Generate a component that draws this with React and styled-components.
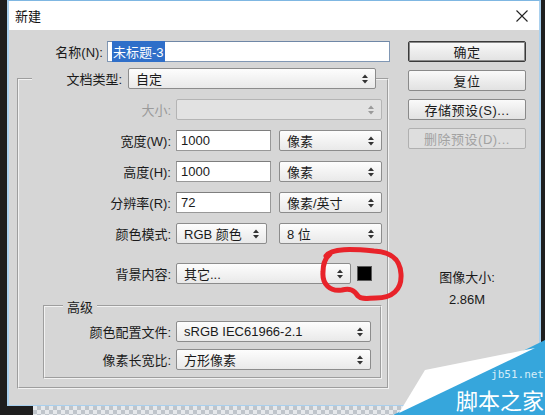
import styled, { createGlobalStyle } from "styled-components";

const GlobalStyle = createGlobalStyle`
  html, body {
    margin: 0;
    padding: 0;
    background: #1e1e1e;
  }
  body {
    font-family: "Liberation Sans", "Noto Sans CJK SC", sans-serif;
    font-size: 13px;
    color: #1a1a1a;
  }
`;

const Screen = styled.div`
  position: relative;
  width: 545px;
  height: 415px;
  overflow: hidden;
  background: #1e1e1e;
`;

const Dialog = styled.div`
  margin-left: 7px;
  width: 534px;
  height: 406px;
  box-sizing: border-box;
  background: #d6d6d6;
  border-left: 2px solid #a9d0ee;
  border-right: 2px solid #a9d0ee;
  border-top: 1px solid #7fb7e2;
  border-bottom: 1px solid #a9d0ee;
  display: flex;
  flex-direction: column;
`;

const TitleBar = styled.div`
  height: 29px;
  flex: none;
  background: #ffffff;
  display: flex;
  align-items: center;
  justify-content: space-between;
  padding: 0 11px 0 6px;
  font-size: 13px;
  color: #111;
`;

const Body = styled.div`
  display: flex;
  padding-top: 11px;
`;

const LeftCol = styled.div`
  width: 382px;
  flex: none;
`;

const RightCol = styled.div`
  margin-left: 17px;
  width: 118px;
  display: flex;
  flex-direction: column;
  gap: 8px;
  text-align: center;
`;

const Row = styled.div`
  display: flex;
  align-items: center;
  height: 21px;
  margin-top: ${(p) => p.$mt || 0}px;
`;

const Label = styled.div`
  width: ${(p) => p.$w}px;
  flex: none;
  text-align: right;
  padding-right: ${(p) => p.$pr ?? 5}px;
  box-sizing: border-box;
  white-space: nowrap;
  color: ${(p) => (p.$disabled ? "#9a9a9a" : "#1a1a1a")};
`;

const TextInput = styled.div`
  width: ${(p) => p.$w}px;
  height: 21px;
  box-sizing: border-box;
  background: #ffffff;
  border: 1px solid ${(p) => (p.$focus ? "#8097b4" : "#989898")};
  border-top-color: ${(p) => (p.$focus ? "#6f87a6" : "#7e7e7e")};
  display: flex;
  align-items: center;
  padding-left: 4px;
  font-size: 13px;
  flex: none;
`;

const Selected = styled.span`
  background: #2f6fc9;
  color: #ffffff;
  padding: 1px 1px;
`;

const Select = styled.div`
  position: relative;
  width: ${(p) => p.$w}px;
  height: 21px;
  box-sizing: border-box;
  border: 1px solid ${(p) => (p.$disabled ? "#b4b4b4" : "#8c8c8c")};
  border-radius: 2px;
  background: ${(p) =>
    p.$disabled
      ? "#e2e2e2"
      : "linear-gradient(#fdfdfd, #f1f1f1 60%, #e9e9e9)"};
  display: flex;
  align-items: center;
  padding-left: 7px;
  margin-left: ${(p) => p.$ml || 0}px;
  flex: none;
  white-space: nowrap;
  svg {
    position: absolute;
    right: 7px;
    top: 5px;
  }
`;

const Swatch = styled.div`
  width: 15px;
  height: 15px;
  margin-left: 6px;
  background: #000;
  border: 1px solid #5a5a5a;
  box-sizing: border-box;
  flex: none;
`;

const Group = styled.fieldset`
  margin: ${(p) => p.$margin};
  width: ${(p) => p.$w}px;
  box-sizing: border-box;
  border: 2px groove #f2f2f2;
  padding: ${(p) => p.$pad};
  min-width: 0;
`;

const Legend = styled.legend`
  padding: ${(p) => p.$pad || "0"};
  margin-left: ${(p) => p.$ml}px;
  display: flex;
  align-items: center;
  height: ${(p) => p.$h}px;
`;

const Rows = styled.div`
  display: flex;
  flex-direction: column;
  gap: ${(p) => p.$gap}px;
  padding-top: ${(p) => p.$pt}px;
`;

const Button = styled.div`
  height: 21px;
  box-sizing: border-box;
  border: 1px solid ${(p) => (p.$default ? "#3a3a3a" : p.$disabled ? "#b0b0b0" : "#8a8a8a")};
  box-shadow: ${(p) => (p.$default ? "inset 0 0 0 1px #8a8a8a" : "none")};
  border-radius: 2px;
  background: ${(p) =>
    p.$disabled ? "#dedede" : "linear-gradient(#fafafa, #ececec 55%, #e2e2e2)"};
  color: ${(p) => (p.$disabled ? "#a2a2a2" : "#1a1a1a")};
  display: flex;
  align-items: center;
  justify-content: center;
  letter-spacing: 0.5px;
`;

const SizeInfo = styled.div`
  margin-top: 110px;
  line-height: 22px;
  color: #1a1a1a;
`;

const Canvas = styled.div`
  margin-left: 33px;
  width: 380px;
  height: 10px;
  background-color: #e6e9ec;
  background-image: linear-gradient(45deg, #bfc5cb 25%, transparent 25%, transparent 75%, #bfc5cb 75%),
    linear-gradient(45deg, #bfc5cb 25%, transparent 25%, transparent 75%, #bfc5cb 75%);
  background-size: 8px 8px;
  background-position: 0 0, 4px 4px;
`;

const Scribble = styled.svg`
  position: absolute;
  left: 312px;
  top: 244px;
  pointer-events: none;
`;

const Watermark = styled.div`
  position: absolute;
  right: 0;
  bottom: 0;
  width: 160px;
  height: 75px;
  svg {
    position: absolute;
    left: 0;
    top: 0;
  }
`;

const WmSite = styled.div`
  position: absolute;
  right: 1px;
  top: 29px;
  font-family: "DejaVu Sans Mono", "Liberation Mono", monospace;
  font-size: 11px;
  line-height: 12px;
  color: #d6eef9;
`;

const WmName = styled.div`
  position: absolute;
  right: 1px;
  top: 46px;
  font-family: "Noto Sans CJK SC", sans-serif;
  font-size: 22px;
  line-height: 26px;
  color: #ffffff;
`;

const Spinner = ({ disabled }) => (
  <svg width="6" height="10" viewBox="0 0 6 10">
    <polygon points="0,4 3,0.5 6,4" fill={disabled ? "#9a9a9a" : "#333"} />
    <polygon points="0,6 3,9.5 6,6" fill={disabled ? "#9a9a9a" : "#333"} />
  </svg>
);

const Close = () => (
  <svg width="12" height="12" viewBox="0 0 12 12">
    <path d="M0.5 0.5 L11.5 11.5 M11.5 0.5 L0.5 11.5" stroke="#222" strokeWidth="1.1" />
  </svg>
);

export default function App() {
  return (
    <Screen>
      <GlobalStyle />
      <Dialog>
        <TitleBar>
          <span>新建</span>
          <Close />
        </TitleBar>
        <Body>
          <LeftCol>
            <Row>
              <Label $w={98} $pr={4}>名称(N):</Label>
              <TextInput $w={283} $focus>
                <Selected>未标题-3</Selected>
              </TextInput>
            </Row>
            <Group $margin="6px 0 0 8px" $w={372} $pad="0 0 8px 0">
              <Legend $ml={13} $h={21}>
                <Label $w={96} $pr={6}>文档类型:</Label>
                <Select $w={248}>
                  自定
                  <Spinner />
                </Select>
              </Legend>
              <Rows $gap={10} $pt={10}>
                <Row>
                  <Label $w={157} $disabled>大小:</Label>
                  <Select $w={206} $disabled>
                    <Spinner disabled />
                  </Select>
                </Row>
                <Row>
                  <Label $w={157}>宽度(W):</Label>
                  <TextInput $w={95}>1000</TextInput>
                  <Select $w={103} $ml={8}>
                    像素
                    <Spinner />
                  </Select>
                </Row>
                <Row>
                  <Label $w={157}>高度(H):</Label>
                  <TextInput $w={95}>1000</TextInput>
                  <Select $w={103} $ml={8}>
                    像素
                    <Spinner />
                  </Select>
                </Row>
                <Row>
                  <Label $w={157}>分辨率(R):</Label>
                  <TextInput $w={95}>72</TextInput>
                  <Select $w={103} $ml={8}>
                    像素/英寸
                    <Spinner />
                  </Select>
                </Row>
                <Row>
                  <Label $w={157}>颜色模式:</Label>
                  <Select $w={91}>
                    RGB 颜色
                    <Spinner />
                  </Select>
                  <Select $w={103} $ml={12}>
                    8 位
                    <Spinner />
                  </Select>
                </Row>
                <Row $mt={9}>
                  <Label $w={157}>背景内容:</Label>
                  <Select $w={175}>
                    其它...
                    <Spinner />
                  </Select>
                  <Swatch />
                </Row>
              </Rows>
              <Group $margin="14px 0 0 24px" $w={339} $pad="0 0 7px 0">
                <Legend $ml={18} $h={16} $pad="0 4px">
                  高级
                </Legend>
                <Rows $gap={7} $pt={7}>
                  <Row>
                    <Label $w={131}>颜色配置文件:</Label>
                    <Select $w={195}>
                      sRGB IEC61966-2.1
                      <Spinner />
                    </Select>
                  </Row>
                  <Row>
                    <Label $w={131}>像素长宽比:</Label>
                    <Select $w={195}>
                      方形像素
                      <Spinner />
                    </Select>
                  </Row>
                </Rows>
              </Group>
            </Group>
          </LeftCol>
          <RightCol>
            <Button $default>确定</Button>
            <Button>复位</Button>
            <Button>存储预设(S)...</Button>
            <Button $disabled>删除预设(D)...</Button>
            <SizeInfo>
              图像大小:
              <br />
              2.86M
            </SizeInfo>
          </RightCol>
        </Body>
      </Dialog>
      <Canvas />
      <Scribble width="96" height="64" viewBox="0 0 96 64">
        <path
          d="M14 12 C20 4 40 5 62 7 C78 8 88 14 89 30 C90 46 80 54 64 54 C56 54 50 56 46 52 C42 46 38 44 30 46 C18 48 10 40 11 28 C11 20 13 14 18 10"
          fill="none"
          stroke="#e8232a"
          strokeWidth="5"
          strokeLinecap="round"
          strokeLinejoin="round"
        />
      </Scribble>
      <Watermark>
        <svg width="160" height="75" viewBox="0 0 160 75">
          <polygon points="8,75 160,0 160,75" fill="#36a6dc" />
          <polygon points="14,73 40,30 150,8" fill="#ffffff" />
        </svg>
        <WmSite>jb51.net</WmSite>
        <WmName>脚本之家</WmName>
      </Watermark>
    </Screen>
  );
}
